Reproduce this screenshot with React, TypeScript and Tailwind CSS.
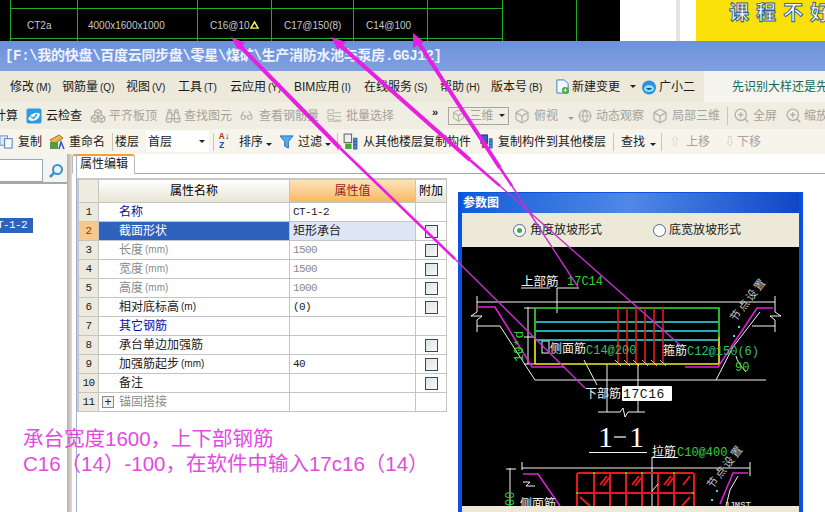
import type { ReactNode } from "react";
import { Binoculars, Box, Boxes, Glasses, Globe, ZoomIn } from "lucide-react";

const cjk = "font-['Liberation_Sans','Noto_Sans_CJK_SC',sans-serif]";
const mono = "font-['Liberation_Mono','Noto_Sans_CJK_SC',monospace]";
const dim = "#b5b3a8";

const rows: {
  no: number;
  name: string;
  unit?: string;
  value?: string;
  tone?: "blue" | "gray" | "selected";
  check?: boolean;
  plus?: boolean;
}[] = [
  { no: 1, name: "名称", value: "CT-1-2", tone: "blue" },
  { no: 2, name: "截面形状", value: "矩形承台", tone: "selected", check: true },
  { no: 3, name: "长度", unit: "(mm)", value: "1500", tone: "gray", check: true },
  { no: 4, name: "宽度", unit: "(mm)", value: "1500", tone: "gray", check: true },
  { no: 5, name: "高度", unit: "(mm)", value: "1000", tone: "gray", check: true },
  { no: 6, name: "相对底标高", unit: "(m)", value: "(0)", check: true },
  { no: 7, name: "其它钢筋", tone: "blue" },
  { no: 8, name: "承台单边加强筋", check: true },
  { no: 9, name: "加强筋起步", unit: "(mm)", value: "40", check: true },
  { no: 10, name: "备注", check: true },
  { no: 11, name: "锚固搭接", tone: "gray", plus: true },
];

function Ico({ className, children }: { className: string; children: ReactNode }) {
  return (
    <svg viewBox="0 0 16 16" className={className}>
      {children}
    </svg>
  );
}

function Caret() {
  return <span className="inline-block h-0 w-0 border-x-[3px] border-t-[3px] border-x-transparent border-t-[#222]" />;
}

function Sep({ className }: { className: string }) {
  return <span className={`h-[18px] w-px shrink-0 bg-[#c9c5b6] ${className}`} />;
}

function MenuLabel({ cn, hot, className }: { cn: string; hot: string; className: string }) {
  return (
    <span className={`shrink-0 whitespace-nowrap ${className}`}>
      {cn}
      <span className="ml-[2px] text-[10px]">({hot})</span>
    </span>
  );
}

function TopStrip() {
  const cell = "flex h-full shrink-0 items-center border-r border-[#1fae1f] pt-[9px] text-[10px] text-[#c8c8c8]";
  return (
    <div className="flex h-[41px] bg-white">
      <div className="relative w-[620px] shrink-0 overflow-hidden bg-black">
        <div className="ml-[10px] flex h-full border-l border-[#1fae1f] font-['Liberation_Sans',sans-serif]">
          <div className={`${cell} w-[67px] pl-[16px]`}>CT2a</div>
          <div className={`${cell} w-[120px] pl-[10px]`}>4000x1600x1000</div>
          <div className={`${cell} w-[74px] pl-[12px]`}>
            C16@10
            <svg viewBox="0 0 10 9" className="h-[8px] w-[9px]">
              <path d="M5 1 L9 8 H1 Z" fill="none" stroke="#ffff30" strokeWidth="1.6" />
            </svg>
          </div>
          <div className={`${cell} w-[82px] pl-[12px]`}>C17@150(8)</div>
          <div className={`${cell} w-[74px] pl-[12px]`}>C14@100</div>
          <div className={`${cell} w-[75px]`} />
          <div className={`${cell} w-[74px]`} />
        </div>
        {/* table rules running over the columns */}
        <div className="absolute top-[8px] left-[10px] h-px w-[492px] bg-[#1fae1f]" />
        <div className="absolute top-[38px] left-[10px] h-px w-[492px] bg-[#1fae1f]" />
      </div>
      <div className="w-[56px] shrink-0 bg-white" />
      <div className="w-[4px] shrink-0 bg-[#e4e4e4]" />
      <div className="w-[16px] shrink-0 bg-white" />
      <div className="flex flex-1 items-start overflow-hidden bg-[#f8e008] pl-[33px]">
        <span className="text-[20px] leading-[26px] tracking-[7px] font-bold whitespace-nowrap text-white [-webkit-text-stroke:1px_#36658f]">
          课程不好
        </span>
      </div>
    </div>
  );
}

function MenuBar() {
  return (
    <div className="flex h-[31px] items-center bg-[#ece8da] pl-[10px] text-[12px] text-[#1a1a1a]">
      <MenuLabel cn="修改" hot="M" className="w-[52px]" />
      <MenuLabel cn="钢筋量" hot="Q" className="w-[64px]" />
      <MenuLabel cn="视图" hot="V" className="w-[52px]" />
      <MenuLabel cn="工具" hot="T" className="w-[52px]" />
      <MenuLabel cn="云应用" hot="Y" className="w-[64px]" />
      <MenuLabel cn="BIM应用" hot="I" className="w-[70px]" />
      <MenuLabel cn="在线服务" hot="S" className="w-[76px]" />
      <MenuLabel cn="帮助" hot="H" className="w-[51px]" />
      <MenuLabel cn="版本号" hot="B" className="w-[64px]" />
      <Ico className="mr-[2px] h-[17px] w-[15px] shrink-0">
        <path d="M2 1 H10 L14 5 V15 H2 Z" fill="#f4f8ff" stroke="#3a78c8" />
        <circle cx="11" cy="12" r="3.6" fill="#46a82e" />
        <path d="M9 12 H13 M11 10 V14" stroke="#fff" />
      </Ico>
      <span className="w-[58px] shrink-0">新建变更</span>
      <Caret />
      <Ico className="mr-[2px] ml-[5px] h-[16px] w-[16px] shrink-0">
        <circle cx="8" cy="8.5" r="7" fill="#2a90e0" />
        <ellipse cx="8" cy="9.5" rx="5" ry="3.6" fill="#8fe0f4" />
        <path d="M5 9 Q8 13 11 9 Z" fill="#0b4fa0" />
      </Ico>
      <span className="w-[45px] shrink-0">广小二</span>
      <div className="flex h-full flex-1 items-center bg-[#f6f4ee] pl-[28px] text-[#0f6a5a]">
        <span className="whitespace-nowrap">先识别大样还是先</span>
      </div>
    </div>
  );
}

function ToolbarOne() {
  const text = "shrink-0 whitespace-nowrap text-[#a5a399]";
  return (
    <div className="flex h-[27px] items-center overflow-hidden bg-[#f0ede2] text-[12px] text-[#1a1a1a]">
      <span className="w-[26px] shrink-0 -translate-x-[6px]">计算</span>
      <Ico className="mr-[4px] h-[16px] w-[16px] shrink-0">
        <rect x="0.5" y="0.5" width="15" height="15" rx="2" fill="#2f9be4" />
        <path d="M2 11 Q8 2 14 6 Q13 13 5 13 Z" fill="#fff" />
        <path d="M5 8.5 L7.5 10.5 L11 6" fill="none" stroke="#2f9be4" strokeWidth="1.5" />
      </Ico>
      <span className="w-[44px] shrink-0">云检查</span>
      <Boxes size={16} color={dim} className="mr-[3px] shrink-0" />
      <span className={`${text} w-[56px]`}>平齐板顶</span>
      <Binoculars size={16} color={dim} className="mr-[3px] shrink-0" />
      <span className={`${text} w-[56px]`}>查找图元</span>
      <Glasses size={13} color={dim} className="mr-[6px] shrink-0" />
      <span className={`${text} w-[68px]`}>查看钢筋量</span>
      <Ico className="mr-[4px] h-[15px] w-[15px] shrink-0">
        <path d="M1 2 H7 V6 H1 Z M1 8 H7 V12 H1 Z M8 5 H15 M8 9 H15 M8 13 H15 M1 14 H15" fill="none" stroke={dim} />
      </Ico>
      <span className={`${text} w-[86px]`}>批量选择</span>
      <span className="w-[16px] shrink-0 -translate-y-[3px] text-[11px] font-bold">»</span>
      <div className="flex h-[18px] w-[61px] shrink-0 items-center justify-between border border-[#a8a69c] pr-[3px] pl-[3px] text-[#a5a399]">
        <Box size={13} color={dim} className="shrink-0" />
        <span className="-ml-[1px]">三维</span>
        <Caret />
      </div>
      <Box size={16} color={dim} className="mr-[4px] ml-[5px] shrink-0" />
      <span className={`${text} w-[34px]`}>俯视</span>
      <span className="w-[10px] shrink-0 opacity-40">
        <Caret />
      </span>
      <Globe size={14} color={dim} className="mr-[4px] shrink-0" />
      <span className={`${text} w-[56px]`}>动态观察</span>
      <Box size={16} color={dim} className="mr-[4px] shrink-0" />
      <span className={`${text} w-[55px]`}>局部三维</span>
      <Sep className="mr-[5px]" />
      <ZoomIn size={17} color={dim} className="mr-[3px] shrink-0" />
      <span className={`${text} w-[32px]`}>全屏</span>
      <ZoomIn size={17} color={dim} className="mr-[2px] shrink-0" />
      <span className={text}>缩放</span>
    </div>
  );
}

function ToolbarTwo() {
  return (
    <div className="flex h-[25px] items-center overflow-hidden bg-[#f7f4ec] text-[12px] text-[#1a1a1a]">
      <Ico className="mr-[4px] -ml-px h-[15px] w-[15px] shrink-0">
        <rect x="1" y="2" width="8" height="10" fill="#dbe8f8" stroke="#6a8fc0" />
        <rect x="6" y="5" width="8" height="10" fill="#f4f8ff" stroke="#4a78b8" />
      </Ico>
      <span className="w-[31px] shrink-0">复制</span>
      <Ico className="mr-[4px] h-[16px] w-[16px] shrink-0">
        <path d="M1 6 L10 1 L14 4 L5 10 Z" fill="#e8b84a" stroke="#a07820" />
        <rect x="1" y="8" width="8" height="7" fill="#5a9848" />
        <path d="M10 15 L12 8 L15 15" fill="none" stroke="#2a5ab0" strokeWidth="1.5" />
      </Ico>
      <span className="w-[43px] shrink-0">重命名</span>
      <Sep className="mr-[2px]" />
      <span className="w-[31px] shrink-0">楼层</span>
      <div className="flex h-[21px] w-[63px] shrink-0 items-center justify-between bg-white pr-[4px] pl-[2px]">
        首层
        <Caret />
      </div>
      <Sep className="mr-[5px] ml-[4px]" />
      <span className={`${mono} mr-[5px] flex h-[18px] w-[15px] shrink-0 flex-col text-[9px] leading-[9px] font-bold text-[#b03020]`}>
        <span>A<span className="text-[#1a1a1a]">↓</span></span>
        <span className="text-[#2050b0]">Z</span>
      </span>
      <span className="w-[27px] shrink-0">排序</span>
      <span className="w-[13px] shrink-0">
        <Caret />
      </span>
      <Ico className="mr-[4px] h-[15px] w-[15px] shrink-0">
        <path d="M1 2 H15 L10 8 V15 L6 13 V8 Z" fill="#5aa8e8" stroke="#2a70b8" />
      </Ico>
      <span className="w-[27px] shrink-0">过滤</span>
      <span className="w-[12px] shrink-0">
        <Caret />
      </span>
      <Sep className="mr-[4px]" />
      <Ico className="mr-[4px] h-[17px] w-[17px] shrink-0">
        <rect x="2" y="1" width="7" height="8" fill="#eee" stroke="#666" />
        <rect x="3" y="10" width="6" height="5" fill="#46a82e" />
        <path d="M11 5 H14 V15 H11 Z M11 8 H14 M11 11 H14" fill="#4a90d8" stroke="#2a60a8" />
      </Ico>
      <span className="w-[116px] shrink-0 whitespace-nowrap">从其他楼层复制构件</span>
      <Ico className="mr-[4px] h-[17px] w-[15px] shrink-0">
        <rect x="2" y="1" width="7" height="9" fill="#3a60c0" stroke="#203a80" />
        <rect x="3" y="10" width="6" height="5" fill="#c04040" />
        <path d="M11 5 H14 V15 H11 Z M11 8 H14 M11 11 H14" fill="#4a90d8" stroke="#2a60a8" />
      </Ico>
      <span className="w-[115px] shrink-0 whitespace-nowrap">复制构件到其他楼层</span>
      <Sep className="mr-[7px]" />
      <span className="w-[29px] shrink-0">查找</span>
      <span className="w-[11px] shrink-0">
        <Caret />
      </span>
      <Sep className="mr-[8px]" />
      <span className="w-[16px] shrink-0 text-[10px] text-[#c0beb4]">⇧</span>
      <span className="w-[39px] shrink-0 text-[#a5a399]">上移</span>
      <span className="w-[12px] shrink-0 text-[10px] text-[#c0beb4]">⇩</span>
      <span className="shrink-0 text-[#a5a399]">下移</span>
    </div>
  );
}

function LeftPanel() {
  return (
    <div className="flex w-[67px] shrink-0 flex-col bg-white">
      <div className="flex h-[30px] items-end border-b-2 border-[#a9a9a4] bg-[#f4f4f0]">
        <div className="h-[23px] w-[43px] border-y border-r border-[#9aa7b8] bg-white" />
        <svg viewBox="0 0 16 16" className="mb-[3px] ml-[5px] h-[16px] w-[16px]">
          <circle cx="9.5" cy="6.5" r="4.5" fill="#e8f4fc" stroke="#3f8fc8" strokeWidth="2" />
          <path d="M6 10 L2 14" stroke="#3f8fc8" strokeWidth="2.5" />
        </svg>
      </div>
      <div className={`${mono} mt-[34px] h-[15px] w-[33px] overflow-hidden bg-[#2f62bd] text-[11px] leading-[15px] tracking-[-0.6px] whitespace-nowrap text-white`}>
        <span className="-ml-[9px] inline-block">CT-1-2</span>
      </div>
    </div>
  );
}

function PropertyTable() {
  const line = "border-b border-r border-[#c4c4c0]";
  return (
    <div className="mt-[4px] ml-[5px] w-[370px] border-t-2 border-l-2 border-[#c8c8c4] text-[12px]">
      <div className="flex h-[23px] leading-[23px]">
        <div className={`${line} w-[20px] bg-[#efece2]`} />
        <div className={`${line} w-[191px] bg-gradient-to-b from-white to-[#e8e4d6] text-center`}>属性名称</div>
        <div className={`${line} w-[126px] bg-gradient-to-b from-[#fde3b8] to-[#f7b860] text-center text-[#9a2020]`}>属性值</div>
        <div className={`${line} flex-1 bg-gradient-to-b from-white to-[#e8e4d6] text-center`}>附加</div>
      </div>
      {rows.map((row) => {
        const selected = row.tone === "selected";
        const nameColor =
          row.tone === "blue" ? "text-[#0a0aa8]" : row.tone === "gray" ? "text-[#8a8a8a]" : selected ? "text-white" : "text-[#1a1a1a]";
        return (
          <div key={row.no} className="flex h-[19px] leading-[18px]">
            <div
              className={`${line} ${mono} w-[20px] text-center text-[11px] tracking-[-0.6px] ${
                selected ? "bg-[#f8c98c] text-[#8a3a10]" : "bg-[#ece9de] text-[#222]"
              }`}
            >
              {row.no}
            </div>
            <div className={`${line} flex w-[191px] items-center whitespace-nowrap ${selected ? "bg-[#2f62bd]" : "bg-white"} ${nameColor} ${row.plus ? "pl-[3px]" : "pl-[20px]"}`}>
              {row.plus && (
                <span className="mr-[5px] flex h-[12px] w-[12px] items-center justify-center border border-[#8a8a8a] bg-[#f0efe8] text-[12px] leading-none text-[#222]">
                  +
                </span>
              )}
              {row.name}
              {row.unit && <span className="ml-[2px] text-[10px]">{row.unit}</span>}
            </div>
            <div
              className={`${line} w-[126px] pl-[3px] ${selected ? "bg-[#dce6f4]" : "bg-white"} ${
                row.tone === "gray" ? "text-[#8a8a8a]" : "text-[#1a1a1a]"
              } ${selected ? "" : `${mono} text-[11px] tracking-[-0.6px]`}`}
            >
              {row.value}
            </div>
            <div className={`${line} flex flex-1 items-center justify-center bg-white`}>
              {row.check && <span className="h-[13px] w-[13px] border border-[#2f4a63] bg-gradient-to-br from-[#dfe3e4] to-[#f8f8f6]" />}
            </div>
          </div>
        );
      })}
    </div>
  );
}

function Drawing() {
  const white = "#f4f4f4";
  const pink = "#e020d8";
  const label = "'Liberation Sans','Noto Sans CJK SC',sans-serif";
  const num = "'Liberation Mono',monospace";
  return (
    <svg viewBox="462 247 337 259" className="h-[259px] w-[337px]" fill="none">
      {/* upper section */}
      <g stroke={white} strokeWidth="1">
        <path d="M477 296 V312 L471 316 H482 L477 320 V332 M477 302 H775 M775 296 V312 L781 316 H770 L775 320 V332" />
        <path d="M477 326 H500 L535 380 H766 M752 326 H775 M760 312 L733 347 L716 380" />
        <path d="M521 288 H550 M557 288 H579 M557 288 V313" />
        <path d="M528 307 V364 M524 308 H534 M524 337 H534 M524 364 H534" />
        <path d="M584 360 L597 385 M607 364 V412 M638 364 V412" />
        <path d="M598 412 H620 L623 408 L625 417 L628 412 H645" />
        <path d="M589 452.5 H647 M652 457.5 H678 M652 457 V506" />
        <path d="M522 462 V470 M750 462 V476 M522 468 H750" />
        <path d="M510 468 V506 M506 469 H516" />
        <path d="M523 482 L530 482 L526 486 L535 486 M738 476 L730 490 L726 506" />
        <path d="M746 372 Q737 362 736 356" />
        <rect x="542" y="341" width="7" height="12" />
      </g>
      <g stroke="#f0f020" strokeWidth="1.6">
        <path d="M535 337 V364 H719 V337" />
      </g>
      <g stroke="#33e033" strokeWidth="1.6">
        <path d="M535 337 V308 H719 V337" />
      </g>
      <g stroke="#38e0e8" strokeWidth="1.4">
        <path d="M536 322 H718 M536 331 H718 M536 340 H718" />
      </g>
      <g stroke="#e81818" strokeWidth="1.6">
        <path d="M618 308 V364 M627 308 V364 M636 308 V364 M645 308 V364 M654 308 V364 M663 308 V364" />
      </g>
      <g stroke="#f4f4f4" strokeWidth="0.8">
        <path d="M615 360 L621 366 M624 360 L630 366 M633 360 L639 366 M642 360 L648 366 M651 360 L657 366 M660 360 L666 366" />
      </g>
      <g stroke={pink} strokeWidth="1.6">
        <path d="M478 307 H495 L532 367 H565 M685 367 H718 L757 308 H773" />
        <path d="M523 474 H538 L560 506 M720 504 L733 473 H748" />
      </g>
      <text x="521" y="286" fill={white} fontSize="12.5" fontFamily={label}>上部筋</text>
      <text x="567" y="285" fill="#33d033" fontSize="12" fontFamily={num}>17C14</text>
      <text x="550" y="353" fill={white} fontSize="12" fontFamily={label}>侧面筋</text>
      <text x="586" y="354" fill="#30c070" fontSize="12" fontFamily={num}>C14@200</text>
      <text x="663" y="355" fill={white} fontSize="12" fontFamily={label}>箍筋</text>
      <text x="687" y="355" fill="#30c070" fontSize="12" fontFamily={num}>C12@150(6)</text>
      <text x="735" y="371" fill="#33d033" fontSize="12" fontFamily={num}>90</text>
      <text transform="translate(523 362) rotate(-90)" fill="#33d033" fontSize="13" fontFamily={num}>10*d</text>
      <text x="585" y="398" fill={white} fontSize="12" fontFamily={label}>下部筋</text>
      <rect x="622" y="386" width="50" height="15" rx="1" fill="#fff" />
      <text x="623" y="398" fill="#111" fontSize="13" letterSpacing="0.6" fontFamily={num}>17C16</text>
      <text x="598" y="447" fill="#fff" fontSize="30" fontFamily="'Liberation Serif',serif">1</text>
      <path d="M614 437 H626" stroke="#fff" strokeWidth="1.2" />
      <text x="629" y="447" fill="#fff" fontSize="30" fontFamily="'Liberation Serif',serif">1</text>
      <text x="652" y="456" fill={white} fontSize="12" fontFamily={label}>拉筋</text>
      <text x="677" y="456" fill="#33d033" fontSize="12" fontFamily={num}>C10@400</text>
      <text transform="translate(749 300) rotate(-52)" textAnchor="middle" dominantBaseline="middle" fill="#c8c8c8" fontSize="11" letterSpacing="2" fontFamily={label}>节点设置</text>
      <text transform="translate(726 467) rotate(-52)" textAnchor="middle" dominantBaseline="middle" fill="#c8c8c8" fontSize="11" letterSpacing="2" fontFamily={label}>节点设置</text>
      <g fill="#38e0e8">
        <rect x="738" y="326" width="2" height="2" />
        <rect x="733" y="335" width="2" height="2" />
        <rect x="716" y="490" width="2" height="2" />
        <rect x="711" y="499" width="2" height="2" />
      </g>
      {/* lower section */}
      <g stroke="#e81818" strokeWidth="2">
        <path d="M577 506 V475 Q577 473 579 473 H692 Q694 473 694 475 V506" />
        <path d="M577 493 H694 M594 473 V506 M610 473 V506 M626 473 V506 M642 473 V506 M658 473 V506 M674 473 V506" />
        <path d="M600 485 L607 476 M603 486 L610 477 M632 485 L639 476 M635 486 L642 477 M664 485 L671 476 M667 486 L674 477 M683 485 L690 476 M580 497 L590 506 M690 497 L682 506" />
      </g>
      <g fill="#33d033">
        <rect x="593" y="472" width="2" height="2" />
        <rect x="625" y="472" width="2" height="2" />
        <rect x="641" y="472" width="2" height="2" />
        <rect x="673" y="472" width="2" height="2" />
        <rect x="576" y="492" width="2" height="2" />
        <rect x="692" y="492" width="2" height="2" />
      </g>
      <path d="M652 491 L658 484" stroke={white} />
      <text x="520" y="508" fill={white} fontSize="12" fontFamily={label}>侧面筋</text>
      <text transform="translate(514 506) rotate(-90)" fill="#33d033" fontSize="12" fontFamily={num}>00</text>
      <text x="724" y="508" fill={white} fontSize="9" fontFamily={num}>JJMST</text>
    </svg>
  );
}

function ParamWindow() {
  return (
    <div className="absolute top-[192px] left-[458px] flex h-[320px] w-[345px] flex-col border-x-4 border-t border-[#0b52e0] bg-[#0b52e0]">
      <div className="h-[20px] bg-gradient-to-r from-[#0f5cd8] via-[#4f88e6] to-[#0f46c8] pl-px text-[12px] leading-[20px] font-bold text-white">
        参数图
      </div>
      <div className="flex h-[34px] items-center bg-[#ece9d8] pl-[51px] text-[12px] text-[#1a1a1a]">
        <span className="mr-[4px] flex h-[13px] w-[13px] items-center justify-center rounded-full border border-[#4a6a90] bg-white">
          <span className="h-[5px] w-[5px] rounded-full bg-[#3faa3f]" />
        </span>
        <span className="w-[123px]">角度放坡形式</span>
        <span className="mr-[3px] h-[13px] w-[13px] rounded-full border border-[#4a6a90] bg-white" />
        <span>底宽放坡形式</span>
      </div>
      <div className="h-[259px] overflow-hidden bg-black">
        <Drawing />
      </div>
      <div className="flex-1 bg-[#ece9d8]" />
    </div>
  );
}

function Arrows() {
  const pink = "#e61fe0";
  const thin = "#c52fd2";
  return (
    <svg viewBox="0 0 825 512" className="pointer-events-none absolute inset-0 h-[512px] w-[825px]" fill="none">
      <polygon points="231,37 245,43 238,50" fill={pink} />
      <path d="M240 46 L340 148" stroke={pink} strokeWidth="4" />
      <path d="M340 148 L455 259" stroke={pink} strokeWidth="2.6" />
      <path d="M455 259 L585 388" stroke={thin} strokeWidth="1.4" />

      <polygon points="331,37 346,42 338,50" fill={pink} />
      <path d="M341 46 L470 160" stroke={pink} strokeWidth="4" />
      <path d="M470 160 L500 186" stroke={pink} strokeWidth="2.6" />
      <path d="M500 186 L680 345" stroke={thin} strokeWidth="1.4" />

      <polygon points="413,33 424,42 413,48" fill={pink} />
      <path d="M418 42 L500 168" stroke={pink} strokeWidth="4" />
      <path d="M500 168 L512 186" stroke={pink} strokeWidth="2.6" />
      <path d="M512 186 L578 287" stroke={thin} strokeWidth="1.4" />
    </svg>
  );
}

export default function App() {
  return (
    <div className={`${cjk} relative h-[512px] w-[825px] overflow-hidden bg-white`}>
      <TopStrip />
      <div className={`${mono} h-[30px] overflow-hidden bg-gradient-to-b from-[#6d92da] to-[#7f9fe2] pl-[5px] text-[14px] leading-[30px] font-bold tracking-[-0.3px] whitespace-nowrap text-[#eef3ff]`}>
        [F:\我的快盘\百度云同步盘\零星\煤矿\生产消防水池与泵房.GGJ12]
      </div>
      <MenuBar />
      <ToolbarOne />
      <ToolbarTwo />
      <div className="flex h-[358px]">
        <LeftPanel />
        <div className="w-[5px] shrink-0 bg-gradient-to-r from-[#b5b3a6] to-[#dedbcd]" />
        <div className="flex-1 bg-white">
          <div className="flex h-[20px] items-end border-b border-[#9aa7b8]">
            <div className="-mb-px h-[20px] w-[63px] rounded-t-[3px] border-x border-t-2 border-b border-[#b8b8b0] border-t-[#f2a030] border-b-white bg-white pl-[7px] text-[12px] leading-[17px] text-[#1a1a1a]">
              属性编辑
            </div>
          </div>
          <PropertyTable />
        </div>
      </div>
      <div className="absolute top-[154px] bottom-0 left-[76px] w-px bg-[#9fb2d4]" />
      <div className="absolute top-[426px] left-[23px] text-[20.5px] leading-[25px] whitespace-pre text-[#e24be2]">
        {"承台宽度1600，上下部钢筋\nC16（14）-100，在软件中输入17c16（14）"}
      </div>
      <ParamWindow />
      <Arrows />
    </div>
  );
}
